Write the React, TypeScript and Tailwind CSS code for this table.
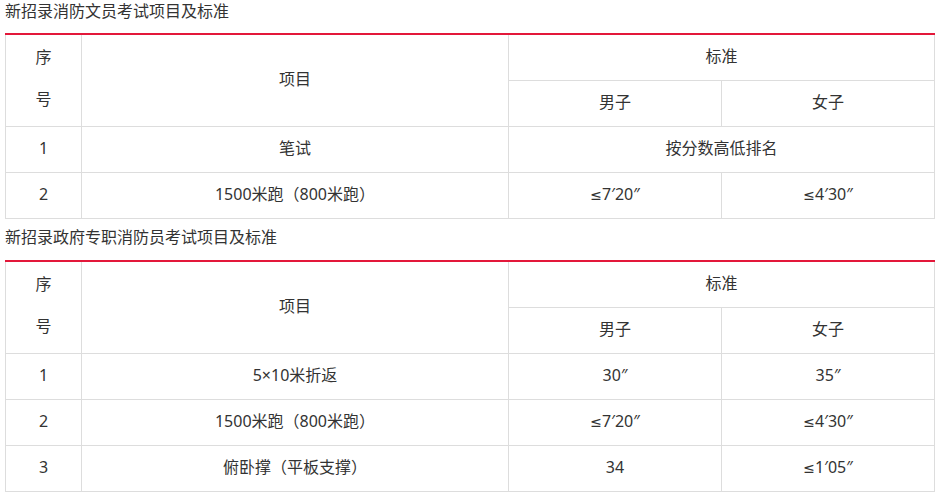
import React from 'react';

type Row = { no: string; item: string; male: string; female?: string };

const table1: Row[] = [
  { no: '1', item: '笔试', male: '按分数高低排名' },
  { no: '2', item: '1500米跑（800米跑）', male: '≤7′20″', female: '≤4′30″' },
];

const table2: Row[] = [
  { no: '1', item: '5×10米折返', male: '30″', female: '35″' },
  { no: '2', item: '1500米跑（800米跑）', male: '≤7′20″', female: '≤4′30″' },
  { no: '3', item: '俯卧撑（平板支撑）', male: '34', female: '≤1′05″' },
];

const cell = 'border-r border-b border-[#dddddd] text-center align-middle px-0 pt-0 pb-[3px] font-normal';

// ≤ in a latin face so it keeps the flat bar
const Val: React.FC<{ v: string }> = ({ v }) =>
  v.startsWith('≤') ? (
    <>
      <span style={{ fontFamily: '"DejaVu Sans", sans-serif' }} className="text-[14px]">≤</span>
      {v.slice(1)}
    </>
  ) : (
    <>{v}</>
  );

const StandardTable: React.FC<{ title: string; rows: Row[]; first?: boolean }> = ({ title, rows, first }) => (
  <div>
    <div className={`pl-[5px] leading-[22px] ${first ? 'mb-[11px]' : 'mt-[7px] mb-[12px]'}`}>{title}</div>
    <div className="ml-[5px] w-[930px]">
      <div className="h-[2px] bg-[#e3183a]" />
      <table className="w-[930px] border-separate border-spacing-0 table-fixed">
        <colgroup>
          <col className="w-[77px]" />
          <col className="w-[427px]" />
          <col className="w-[213px]" />
          <col className="w-[213px]" />
        </colgroup>
        <tbody>
          <tr className="h-[46px]">
            <td rowSpan={2} className={`${cell} border-l leading-[42px] !pb-[6px]`}>
              <div>序</div>
              <div>号</div>
            </td>
            <td rowSpan={2} className={cell}>项目</td>
            <td colSpan={2} className={cell}>标准</td>
          </tr>
          <tr className="h-[46px]">
            <td className={cell}>男子</td>
            <td className={cell}>女子</td>
          </tr>
          {rows.map((r) => (
            <tr key={r.no} className="h-[46px]">
              <td className={`${cell} border-l`}>{r.no}</td>
              <td className={cell}>{r.item}</td>
              {r.female === undefined ? (
                <td colSpan={2} className={cell}>{r.male}</td>
              ) : (
                <>
                  <td className={cell}><Val v={r.male} /></td>
                  <td className={cell}><Val v={r.female} /></td>
                </>
              )}
            </tr>
          ))}
        </tbody>
      </table>
    </div>
  </div>
);

export default function App() {
  return (
    <div
      className="w-[942px] h-[497px] bg-white text-[#333333] text-[16px] overflow-hidden"
      style={{ fontFamily: '"Noto Sans", "Noto Sans CJK SC", sans-serif' }}
    >
      <StandardTable title="新招录消防文员考试项目及标准" rows={table1} first />
      <StandardTable title="新招录政府专职消防员考试项目及标准" rows={table2} />
    </div>
  );
}
